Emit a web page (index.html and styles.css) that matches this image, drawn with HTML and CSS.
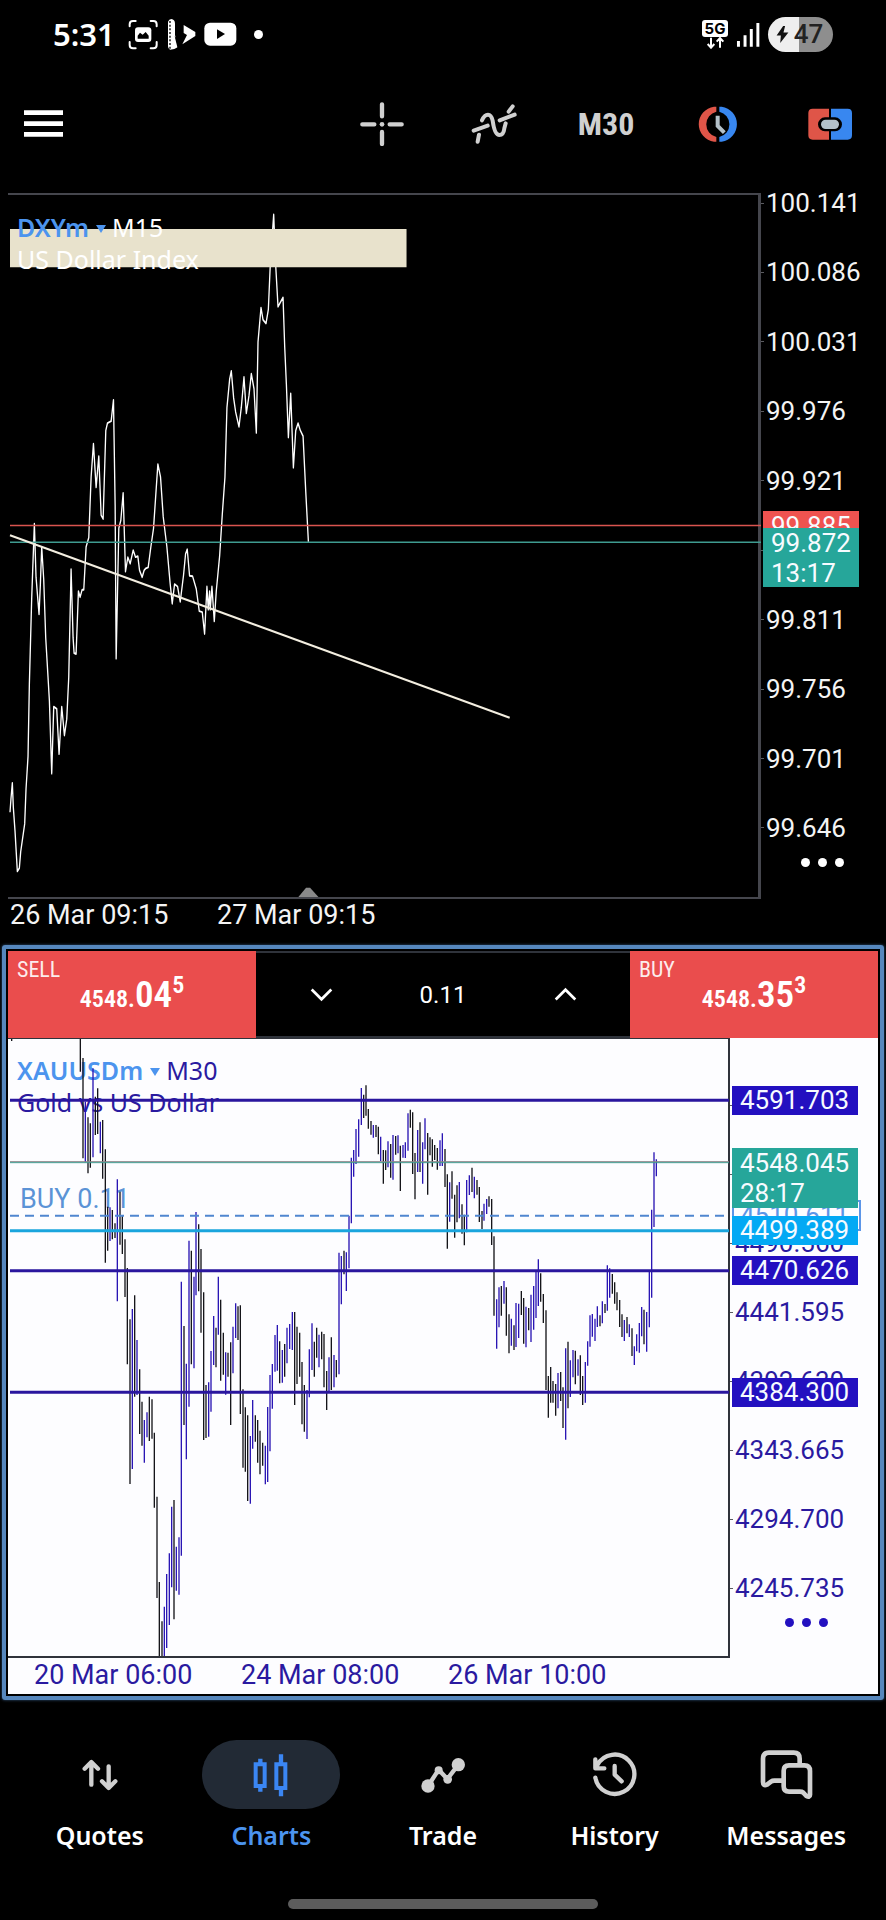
FILE: index.html
```html
<!DOCTYPE html>
<html lang="en">
<head>
<meta charset="utf-8">
<meta name="viewport" content="width=device-width, initial-scale=1">
<title>Charts</title>
<link rel="stylesheet" href="styles.css">
</head>
<body>
<header class="status">
  <div class="status-left">
    <time class="clock">5:31</time>
    <svg class="s-shot" viewBox="384 58 93 93" aria-hidden="true"><path d="M389 80V74Q389 64 399 64H407M452 64H460Q470 64 470 74V80M470 127V136Q470 146 460 146H452M407 146H399Q389 146 389 136V127" fill="none" stroke="#fff" stroke-width="6" stroke-linecap="round"/><rect x="405" y="83" width="49" height="44" rx="9" fill="#fff"/><path d="M413 117V108L420 99L428 105L437 97L446 108V117Z" fill="#000"/></svg>
    <svg class="s-app" viewBox="507 58 87 93" aria-hidden="true"><path d="M510 66Q513 58 520 58Q531 60 531 72V106L540 142Q530 150 516 150Q510 148 510 140Z" fill="#fff"/><path d="M516 64V148" stroke="#000" stroke-width="4" stroke-dasharray="6 5"/><path d="M530 110L553 134L540 150Z" fill="#000"/><path d="M557 76L592 97V109L553 134L567 106L557 100Z" fill="#fff"/></svg>
    <svg class="s-tube" viewBox="612 68 99 72" aria-hidden="true"><rect x="613" y="70" width="96" height="69" rx="17" fill="#fff"/><path d="M651 90V119L675 104Z" fill="#000"/></svg>
    <span class="dot"></span>
  </div>
  <div class="status-right">
    <div class="net"><span class="net-tag">5G</span><svg class="net-arrows" viewBox="776 110 60 36" aria-hidden="true"><path d="M794 112V141M784 131L794 142L804 131M821 142V114M811 124L821 113L831 124" fill="none" stroke="#fff" stroke-width="6"/></svg></div>
    <svg class="signal" viewBox="874 66 72 76" aria-hidden="true"><path d="M881 124V141M901 106V141M920 87V141M940 69V141" stroke="#fff" stroke-width="9"/></svg>
    <div class="battery"><svg class="bolt" viewBox="998 78 38 52" aria-hidden="true"><path d="M1019 78L999 107H1012L1010 130L1035 98H1020L1025 78Z" fill="#111"/></svg><span>47</span></div>
  </div>
</header>

<div class="toolbar">
  <button class="tool menu" aria-label="Menu"><svg viewBox="72 330 117 81"><path d="M72 338H189M72 371H189M72 403H189" stroke="#fff" stroke-width="14"/></svg></button>
  <button class="tool" aria-label="Crosshair"><svg class="i44" viewBox="1085 304 132 132"><path d="M1151 311V347M1151 394V430M1092 371H1128M1174 371H1210" stroke="#d0d0d0" stroke-width="13" stroke-linecap="round"/><circle cx="1151" cy="371" r="7" fill="#d0d0d0"/></svg></button>
  <button class="tool" aria-label="Indicators"><svg class="i46" viewBox="84 308 138 126"><g fill="none" stroke="#d0d0d0" stroke-width="12" stroke-linecap="round"><path d="M104 424L108 403M117 360Q124 343 135 343Q145 343 149 361Q155 404 169 404Q182 404 184 384L188 369M197 334L209 318"/><path d="M92 391L134 376M170 360L215 343"/></g></svg></button>
  <button class="tool period">M30</button>
  <button class="tool" aria-label="Trading session"><svg class="i44" viewBox="761 304 132 132"><path d="M822 318V333A39 39 0 0 0 822 409V423H815A53 53 0 0 1 815 318Z" fill="#df5548"/><path d="M831 318V333A39 39 0 0 1 831 409V423H838A53 53 0 0 0 838 318Z" fill="#3887f0"/><path d="M826 345V376L846 396" fill="none" stroke="#b4c1c9" stroke-width="12"/></svg></button>
  <button class="tool" aria-label="One click trading"><svg class="i44" viewBox="1095 304 132 132"><path d="M1158 324H1109Q1096 324 1096 337V404Q1096 417 1109 417H1158V392H1146A21 21 0 0 1 1146 350H1158Z" fill="#df5548"/><path d="M1164 324H1214Q1227 324 1227 337V404Q1227 417 1214 417H1164V392H1176A21 21 0 0 0 1176 350H1164Z" fill="#3887f0"/><rect x="1134" y="357" width="54" height="28" rx="14" fill="#b4c1c9"/></svg></button>
</div>

<main>
<section class="chart dxy">
  <div class="stage">
    <div class="plot">
      <svg class="drawing" viewBox="24 34 2247 1508" preserveAspectRatio="none" aria-hidden="true">
        <path class="quote" d="M30 1360L33 1330 37 1297 40 1350 45 1400 52 1487 58 1480 62 1445 74 1385 78 1310 84 1240 88 1085 95 900 103 740 108 855 117 935 121 870 125 790 131 860 137 985 148 1120 155 1277 161 1133 170 1138 177 1235 185 1133 193 1195 200 1160 206 1070 213 838 219 985 222 1018 228 1020 235 885 240 898 246 882 251 882 258 790 266 770 273 640 280 568 288 662 296 595 303 722 309 730 317 540 322 524 333 520 340 474 345 700 348 1030 356 750 362 733 369 674 376 843 383 812 390 826 399 797 406 812 413 810 418 840 426 855 432 840 437 836 444 834 452 790 460 750 473 612 481 640 489 725 500 790 510 870 516 912 523 870 532 875 540 908 550 850 556 805 561 795 568 852 577 853 588 880 597 928 606 930 613 977 620 875 624 925 628 885 630 925 635 875 642 950 648 885 658 810 666 720 674 640 680 490 688 430 693 412 700 470 706 500 716 532 723 490 731 425 738 503 746 465 753 418 761 450 768 545 773 350 782 276 788 302 797 310 804 280 810 180 820 76 826 185 833 274 848 254 853 360 858 440 864 555 871 460 879 620 886 540 893 524 900 540 908 552 916 670 924 779"/>
        <path class="zone" d="M30 107H1218V189H30Z"/>
        <path class="ask" d="M30 744H2280"/>
        <path class="bid" d="M30 780H2280"/>
        <path class="trend" d="M30 765L1527 1157"/>
        <path class="mark" d="M894 1542L917 1522H929L954 1542Z"/>
      </svg>
      <div class="title"><button class="symbol">DXYm <i class="caret"></i></button> M15<br>US Dollar Index</div>
    </div>
    <div class="axis">
      <div class="scale"><span>100.141</span><span>100.086</span><span>100.031</span><span>99.976</span><span>99.921</span><span>99.866</span><span>99.811</span><span>99.756</span><span>99.701</span><span>99.646</span></div>
      <span class="tag red t-ask">99.885</span>
      <span class="tag teal t-bid">99.872<br>13:17</span>
      <button class="more" aria-label="More"><i></i><i></i><i></i></button>
    </div>
  </div>
  <div class="dates"><span>26 Mar 09:15</span><span>27 Mar 09:15</span></div>
</section>

<section class="chart gold">
  <div class="trade">
    <button class="deal"><span class="side">SELL</span><span class="price">4548.<b>04</b><sup>5</sup></span></button>
    <div class="volume">
      <button aria-label="Decrease volume"><svg class="chev" viewBox="930 170 68 44"><path d="M935 177L964 206L993 177"/></svg></button>
      <input type="text" value="0.11" aria-label="Volume">
      <button aria-label="Increase volume"><svg class="chev" viewBox="332 170 68 44"><path d="M337 207L366 178L395 207"/></svg></button>
    </div>
    <button class="deal"><span class="side">BUY</span><span class="price">4548.<b>35</b><sup>3</sup></span></button>
  </div>
  <div class="stage">
    <div class="plot">
      <div class="title"><button class="symbol">XAUUSDm <i class="caret"></i></button> M30<br>Gold vs US Dollar</div>
      <span class="order">BUY 0.11</span>
      <svg class="drawing" viewBox="24 27 2160 1851" preserveAspectRatio="none" aria-hidden="true">
        <path class="down" d="M35 27V33M241 27V125M249 84V385M264 262V430M271 280V413M286 200V315M293 175V312M308 270V446M316 358V698M323 530V662M337 540V628M345 580V624M360 485V644M367 555V672M375 628V801M382 714V1003M390 868V1362M404 796V1100M419 1018V1212M426 1115V1247M448 1100V1233M456 1108V1226M463 1208V1433M471 1400V1704M478 1656V1878M486 1774V1878M522 1410V1768M552 888V1185M574 662V1003M596 583V784M603 657V908M611 787V1230M618 1065V1224M648 893V1012M662 809V1052M670 908V1034M684 968V1040M692 937V1185M714 829V930M721 826V1152M729 1078V1313M736 1132V1325M743 1156V1413M766 1156V1235M773 1170V1298M780 1202V1333M788 1238V1307M839 934V1060M854 942V1040M884 846V1125M891 890V1062M899 908V1040M906 996V1183M913 1065V1205M943 935V1040M950 893V983M965 905V988M972 912V1072M980 1023V1140M994 922V1080M1009 990V1042"/>
        <path class="up" d="M256 215V397M279 115V382M301 275V370M330 532V633M352 448V814M397 837V1317M411 930V1095M433 1170V1298M441 1147V1222M493 1730V1878M500 1632V1854M508 1570V1785M515 1430V1672M529 1550V1682M537 1522V1694M544 755V1577M559 1001V1288M567 632V1130M582 740V1015M588 546V796M626 1057V1220M633 963V1145M641 858V1005M655 740V914M677 967V1094M699 890V1030M707 820V924M751 1218V1421M758 1110V1256M796 1247V1363M803 1131V1356M810 1035V1264M817 1002V1136M825 915V1025M832 885V1022M847 960V1058M861 893V1000M869 882V957M877 846V960M921 1080V1227M928 958V1102M936 880V1020M957 914V1012M987 982V1085M1002 975V1072"/>
        <g transform="translate(960 90)">
          <path class="down" d="M72 572V643M131 104V174M138 76V167M145 147V206M153 183V224M168 195V231M175 200V283M190 270V371M197 271V330M212 252V353M227 228V284M241 257V393M271 149V203M278 157V342M285 279V418M300 187V336M323 219V404M330 232V286M337 238V320M344 255V300M352 264V329M375 267V381M382 343V566M396 334V416M404 404V533M411 376V487M426 433V521M433 464V556M456 323V396M471 360V404M478 381V486M486 453V507M507 409V440M515 417V555M522 529V767M544 678V767M559 682V827M567 763V880M582 796V870M604 693V765M611 714V851M626 744V811M662 640V725M670 702V789M678 751V990M685 948V1073M692 921V1028M699 963V1028M707 972V1067M722 936V1023M729 982V1104M744 845V1045M766 872V973M781 886V1005M788 948V1035M840 766V799M855 732V759M877 642V701M884 667V731M891 697V751M899 720V801M906 763V831M921 771V820M936 805V888M972 749V853"/>
          <path class="up" d="M57 578V943M64 588V733M79 577V693M87 467V625M94 293V490M101 270V350M108 207V312M116 178V290M124 84V195M160 195V233M182 230V303M204 244V322M219 225V359M234 226V280M249 255V293M256 247V294M264 160V272M293 210V336M308 247V371M315 175V268M360 241V318M367 220V318M389 367V485M418 366V475M440 360V517M448 346V405M463 350V415M492 431V482M500 417V462M530 718V866M537 682V802M552 663V731M574 776V857M588 729V861M596 731V834M618 740V862M633 704V846M641 678V809M648 636V774M655 598V738M714 939V1045M737 865V1139M751 901V1011M759 870V952M774 898V947M796 906V1028M803 844V917M810 766V860M817 762V830M825 776V843M832 739V801M847 724V790M862 616V752M869 625V713M913 780V843M928 793V831M943 859V915M950 823V874M958 789V878M965 741V829M980 756V875M988 634V802M995 449V713M1002 277V501M1009 298V349"/>
        </g>
        <path class="level" d="M30 211H2187M30 722H2187M30 1087H2187"/>
        <path class="bid-top" d="M30 395H2187"/>
        <path class="bid" d="M30 398H2187"/>
        <path class="entry" d="M30 557H2187"/>
        <path class="stop" d="M30 602H2187"/>
      </svg>
    </div>
    <div class="axis">
      <div class="scale"><span>4588.490</span><span>4539.525</span><span>4490.560</span><span>4441.595</span><span>4392.630</span><span>4343.665</span><span>4294.700</span><span>4245.735</span></div>
      <span class="tag outline t-entry">4510.611</span>
      <span class="tag navy t-l1">4591.703</span>
      <span class="tag teal t-bid">4548.045<br>28:17</span>
      <span class="tag sky t-stop">4499.389</span>
      <span class="tag navy t-l2">4470.626</span>
      <span class="tag navy t-l3">4384.300</span>
      <button class="more" aria-label="More"><i></i><i></i><i></i></button>
    </div>
  </div>
  <div class="dates"><span>20 Mar 06:00</span><span>24 Mar 08:00</span><span>26 Mar 10:00</span></div>
</section>
</main>

<nav class="tabs">
  <a href="#quotes"><span class="pill"><svg viewBox="222 150 150 150"><path d="M271 254V187M251 206L271 186L291 206M323 199V264M303 244L323 264L343 244" fill="none" stroke="#d0d0d0" stroke-width="13" stroke-linecap="round" stroke-linejoin="round"/></svg></span>Quotes</a>
  <a href="#charts" class="active" aria-current="page"><span class="pill"><svg viewBox="740 152 150 150"><path d="M783 178V192M783 262V277M845 165V192M845 268V291" stroke="#3b86f3" stroke-width="13"/><path d="M769 195H796V260H769ZM831 195H858V266H831Z" fill="none" stroke="#3b86f3" stroke-width="12"/></svg></span>Charts</a>
  <a href="#trade"><span class="pill"><svg viewBox="1255 150 150 150"><path d="M1285 258L1317 209L1343 237L1376 194" fill="none" stroke="#d0d0d0" stroke-width="13" stroke-linejoin="round"/><g fill="#d0d0d0"><circle cx="1285" cy="258" r="20"/><circle cx="1317" cy="211" r="12"/><circle cx="1344" cy="238" r="13"/><circle cx="1376" cy="194" r="20"/></g></svg></span>Trade</a>
  <a href="#history"><span class="pill"><svg viewBox="441 152 150 150"><path d="M457 235A59 59 0 1 0 463 197L458 207M457 180V207H484M515 200V226L536 246" fill="none" stroke="#d0d0d0" stroke-width="13" stroke-linecap="round" stroke-linejoin="round"/></svg></span>History</a>
  <a href="#messages"><span class="pill"><svg class="wide" viewBox="945 140 171 171"><path d="M1070 190V178Q1070 160 1052 160H978Q960 160 960 178V248Q960 261 972 256L984 247Q988 244 994 244H1014M1038 198H1084Q1101 198 1101 215V286Q1101 296 1090 290L1081 280Q1077 277 1071 277H1038Q1022 277 1022 261V214Q1022 198 1038 198Z" fill="none" stroke="#d0d0d0" stroke-width="14" stroke-linecap="round"/></svg></span>Messages</a>
</nav>
<div class="home"></div>
</body>
</html>
```
FILE: styles.css
```css
* { box-sizing: border-box; }
body {
  margin: 0;
  min-height: 100vh;
  display: flex;
  flex-direction: column;
  background: #000;
  color: #f4f4f4;
  font-family: Roboto, "Noto Sans", sans-serif;
  font-size: 26px;
}
button, input { font: inherit; color: inherit; background: none; border: 0; padding: 0; margin: 0; }
svg { display: block; }

/* status bar */
.status {
  display: flex;
  justify-content: space-between;
  align-items: center;
  height: 68px;
  padding: 0 53px;
  color: #fff;
}
.status-left, .status-right { display: flex; align-items: center; gap: 8px; }
.clock { font: 600 31px/40px "Noto Sans", sans-serif; margin-right: 5px; }
.s-shot { width: 31px; height: 31px; }
.s-app { width: 29px; height: 31px; }
.s-tube { width: 33px; height: 24px; }
.dot { width: 9px; height: 9px; margin-left: 9px; border-radius: 50%; background: #fff; }
.net { display: flex; flex-direction: column; align-items: center; }
.net-tag { width: 26px; border-radius: 3px; background: #fff; color: #000; font: 700 15px/17px Inter, sans-serif; text-align: center; }
.net-arrows { width: 20px; height: 12px; }
.signal { width: 24px; height: 25px; }
.battery {
  display: flex;
  align-items: center;
  justify-content: center;
  gap: 5px;
  width: 65px;
  height: 35px;
  border-radius: 18px;
  background: linear-gradient(90deg, #eee 47%, #8e8e8e 47%);
  color: #222;
  font: 500 26px/35px Roboto, sans-serif;
}
.battery span { margin-right: 2px; }
.bolt { width: 13px; height: 17px; }

/* toolbar */
.toolbar {
  display: grid;
  grid-template-columns: 1fr repeat(5, 112px);
  align-items: center;
  height: 111px;
}
.tool { display: flex; justify-content: center; align-items: center; height: 64px; }
.menu { justify-self: start; padding-left: 24px; }
.menu svg { width: 39px; height: 27px; }
.i44 { width: 44px; height: 44px; }
.i46 { width: 46px; height: 42px; }
.period { color: #d0d0d0; font: 700 32px/40px "Roboto Condensed", "Liberation Sans Narrow", Roboto, sans-serif; }

/* charts */
main { display: block; }
.stage { display: flex; position: relative; }
.plot { position: relative; flex: 1; }
.drawing { width: 100%; height: 100%; overflow: visible; }
.drawing path { fill: none; vector-effect: non-scaling-stroke; stroke-width: 2px; }
.title {
  position: absolute;
  left: 9px;
  font: 400 25px/32px "Noto Sans", sans-serif;
  white-space: nowrap;
}
.symbol { color: #4c94ee; font-weight: 600; }
.caret {
  display: inline-block;
  margin: 0 0 4px;
  border: 5px solid transparent;
  border-top: 8px solid #4c94ee;
  border-bottom: 0;
}
.axis { position: relative; }
.scale {
  display: flex;
  flex-direction: column;
  justify-content: space-between;
  line-height: 20px;
}
.scale span { display: flex; align-items: center; gap: 2px; }
.scale span::before { content: ""; width: 3px; height: 1px; background: #5a5b60; }
.tag { position: absolute; left: 2px; padding-left: 8px; line-height: 30px; color: #f7fbff; }
.red { background: #ef5350; }
.teal { background: #26a69a; }
.navy { background: #2310c0; }
.sky { background: #03a9f4; }
.more { position: absolute; display: flex; gap: 8px; }
.more i { width: 9px; height: 9px; border-radius: 50%; background: currentColor; }
.dates { display: flex; font-size: 27px; line-height: 32px; white-space: nowrap; }
.dates span { width: 207px; }

.dxy { padding: 14px 0 0 8px; }
.dxy .plot { height: 706px; border: solid #45464d; border-width: 2px 3px 2px 0; }
.dxy .axis { width: 125px; }
.dxy .scale { height: 645px; }
.dxy .title { top: 16px; color: #fff; }
.dxy .tag { width: 96px; }
.dxy .t-ask { top: 318px; }
.dxy .t-bid { top: 335px; height: 59px; }
.dxy .more { right: 42px; top: 665px; color: #fff; }
.dxy .dates { padding-left: 2px; }
.drawing .quote { vector-effect: none; stroke: #fff; stroke-width: 4px; stroke-linejoin: round; }
.drawing .zone { fill: #e8e2cc; }
.drawing .ask { vector-effect: none; stroke: #d9544f; stroke-width: 3px; }
.drawing .bid { vector-effect: none; stroke: #3f9b90; stroke-width: 3px; }
.drawing .trend { stroke: #f3eee0; }
.drawing .mark { fill: #8a8a8a; }

.gold {
  margin: 14px 2px 0;
  padding: 2px;
  border: 4px solid #5687bd;
  border-radius: 3px;
  box-shadow: 0 0 3px #35587f;
}
.trade { display: grid; grid-template-columns: 248fr 374fr 248fr; height: 87px; }
.deal {
  display: flex;
  flex-direction: column;
  align-items: flex-start;
  padding: 9px;
  background: #ea4d4d;
  color: #fff;
  text-align: left;
  font-family: "Roboto Condensed", "Liberation Sans Narrow", Roboto, sans-serif;
}
.side { font-size: 22px; line-height: 20px; opacity: .9; }
.price { align-self: center; font-size: 24px; font-weight: 600; line-height: 30px; white-space: nowrap; }
.price b { font-size: 37px; font-weight: 600; }
.price sup { font-size: 24px; line-height: 0; vertical-align: 14px; }
.volume {
  display: grid;
  grid-template-columns: 130px 1fr 130px;
  align-items: center;
  border: solid #2f333b;
  border-width: 2px 0;
}
.volume button { display: flex; justify-content: center; align-items: center; height: 60px; }
.volume input { width: 100%; min-width: 0; font-size: 24px; text-align: center; color: #fff; }
.chev { width: 23px; height: 15px; }
.chev path { fill: none; stroke: #fff; stroke-width: 8; }
.gold .stage, .gold .dates { background: #fdfdff; color: #2a1aa0; }
.gold .plot { height: 620px; border: solid #30333b; border-width: 1px 2px 2px 0; }
.gold .axis { width: 148px; }
.gold .scale { height: 503px; margin-top: 57px; }
.gold .title { top: 15px; }
.gold .tag { width: 126px; line-height: 29px; }
.gold .outline { width: 129px; border: 2px solid #5c95e8; color: #5c95e8; padding-left: 6px; line-height: 27px; background: #fdfdff; }
.gold .t-l1 { top: 48px; }
.gold .t-bid { top: 110px; height: 60px; line-height: 30px; }
.gold .t-entry { top: 162px; }
.gold .t-stop { top: 178px; }
.gold .t-l2 { top: 218px; }
.gold .t-l3 { top: 340px; }
.gold .more { right: 50px; top: 580px; color: #2310c0; }
.gold .dates { padding: 1px 0 3px 26px; }
.order { position: absolute; left: 12px; top: 144px; font-size: 27px; line-height: 32px; color: #5b93d6; }
.gold .drawing { position: relative; }
.gold .up, .gold .down { vector-effect: none; stroke-width: 4px; }
.drawing .up { stroke: #2a16b4; }
.drawing .down { stroke: #15151a; }
.drawing .level { stroke: #2a169e; stroke-width: 3px; }
.drawing .bid-top { stroke: #8d8488; stroke-width: 1px; }
.drawing .entry { stroke: #4f86d0; stroke-dasharray: 9px 6px; }
.drawing .stop { stroke: #1aa5dd; stroke-width: 3px; }

/* bottom navigation */
.tabs { display: grid; grid-template-columns: repeat(5, 1fr); padding: 40px 14px 0; }
.tabs a {
  display: flex;
  flex-direction: column;
  align-items: center;
  gap: 8px;
  color: #fff;
  text-decoration: none;
  font: 600 25px/36px "Noto Sans", sans-serif;
}
.tabs .active { color: #4c94ee; }
.pill { display: flex; justify-content: center; align-items: center; width: 138px; height: 69px; border-radius: 35px; }
.active .pill { background: #222a35; }
.pill svg { width: 50px; height: 50px; }
.pill .wide { width: 57px; height: 57px; }
.home { width: 35%; height: 10px; margin: auto auto 11px; border-radius: 5px; background: #5c5c5c; }
```
